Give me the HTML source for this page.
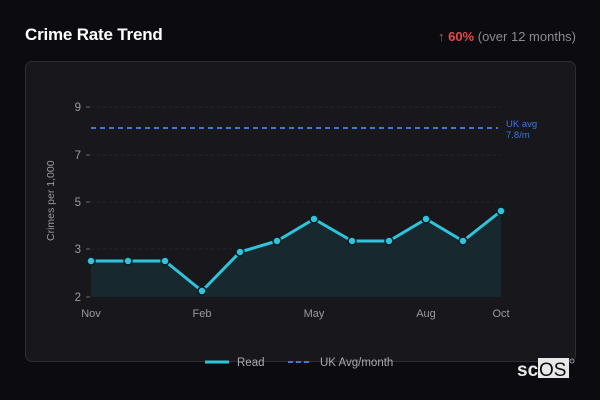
<!DOCTYPE html>
<html><head><meta charset="utf-8"><style>
html,body{margin:0;padding:0;width:600px;height:400px;background:#0c0b10;overflow:hidden;font-family:"Liberation Sans",sans-serif;}
.title{position:absolute;left:25px;top:25px;color:#fff;font-weight:bold;font-size:17px;letter-spacing:-0.2px;}
.stat{position:absolute;right:24px;top:29px;font-size:13px;color:#8a8a90;}
.stat b{color:#e5484d;}
.card{position:absolute;left:25px;top:61px;width:549px;height:299px;background:#18171c;border:1px solid #2e2d33;border-radius:7px;}
svg{position:absolute;left:0;top:0;}
</style></head><body>
<div class="title">Crime Rate Trend</div>
<div class="stat"><span style="color:#e5484d">↑</span> <b>60%</b> (over 12 months)</div>
<div class="card"></div>
<svg width="600" height="400" font-family="Liberation Sans, sans-serif">
 <g stroke="#27262c" stroke-width="1" stroke-dasharray="3,3">
  <line x1="91" y1="107" x2="501" y2="107"/>
  <line x1="91" y1="155" x2="501" y2="155"/>
  <line x1="91" y1="202" x2="501" y2="202"/>
  <line x1="91" y1="249" x2="501" y2="249"/>
 </g>
 <g stroke="#6a6a70" stroke-width="1">
  <line x1="86" y1="107" x2="90" y2="107"/><line x1="86" y1="155" x2="90" y2="155"/>
  <line x1="86" y1="202" x2="90" y2="202"/><line x1="86" y1="249" x2="90" y2="249"/>
  <line x1="86" y1="297" x2="90" y2="297"/>
 </g>
 <g fill="#9a9aa0" font-size="11.5" text-anchor="end">
  <text x="81" y="111">9</text><text x="81" y="159">7</text><text x="81" y="206">5</text><text x="81" y="253">3</text><text x="81" y="301">2</text>
 </g>
 <text x="0" y="0" fill="#9a9aa0" font-size="10.5" transform="translate(54,241) rotate(-90)">Crimes per 1,000</text>
 <g fill="#9a9aa0" font-size="11" text-anchor="middle">
  <text x="91" y="317">Nov</text><text x="202" y="317">Feb</text><text x="314" y="317">May</text><text x="426" y="317">Aug</text><text x="501" y="317">Oct</text>
 </g>
 <line x1="91" y1="128" x2="498" y2="128" stroke="#3b78d8" stroke-width="2" stroke-dasharray="5,4"/>
 <text x="506" y="127" fill="#3b78d8" font-size="9.5">UK avg</text>
 <text x="506" y="138" fill="#3b78d8" font-size="9.5">7.8/m</text>
 <path d="M91,261 L128,261 L165,261 L202,291 L240,252 L277,241 L314,219 L352,241 L389,241 L426,219 L463,241 L501,211 L501,297 L91,297Z" fill="#17292f"/>
 <polyline points="91,261 128,261 165,261 202,291 240,252 277,241 314,219 352,241 389,241 426,219 463,241 501,211" fill="none" stroke="#2ec4dc" stroke-width="3" stroke-linejoin="round"/>
 <g fill="#2ec4dc" stroke="#0c1a20" stroke-width="1.5">
  <circle cx="91" cy="261" r="4"/><circle cx="128" cy="261" r="4"/><circle cx="165" cy="261" r="4"/><circle cx="202" cy="291" r="4"/><circle cx="240" cy="252" r="4"/><circle cx="277" cy="241" r="4"/><circle cx="314" cy="219" r="4"/><circle cx="352" cy="241" r="4"/><circle cx="389" cy="241" r="4"/><circle cx="426" cy="219" r="4"/><circle cx="463" cy="241" r="4"/><circle cx="501" cy="211" r="4"/>
 </g>
 <line x1="205" y1="362" x2="229" y2="362" stroke="#2ec4dc" stroke-width="3"/>
 <text x="237" y="366" fill="#aaaab0" font-size="11.5">Read</text>
 <line x1="288" y1="362" x2="312" y2="362" stroke="#3b78d8" stroke-width="2" stroke-dasharray="5,3"/>
 <text x="320" y="366" fill="#aaaab0" font-size="11.5">UK Avg/month</text>
 <rect x="538" y="358" width="31" height="20" fill="#e8e8e8"/>
 <text x="517" y="376" fill="#e8e8e8" font-size="19" font-weight="bold" font-family="Liberation Sans, sans-serif">sc</text>
 <text x="539" y="376" fill="#0c0b10" font-size="19" font-family="Liberation Sans, sans-serif">OS</text>
 <circle cx="572" cy="361" r="2" fill="none" stroke="#aaa" stroke-width="0.8"/>
</svg>
</body></html>
